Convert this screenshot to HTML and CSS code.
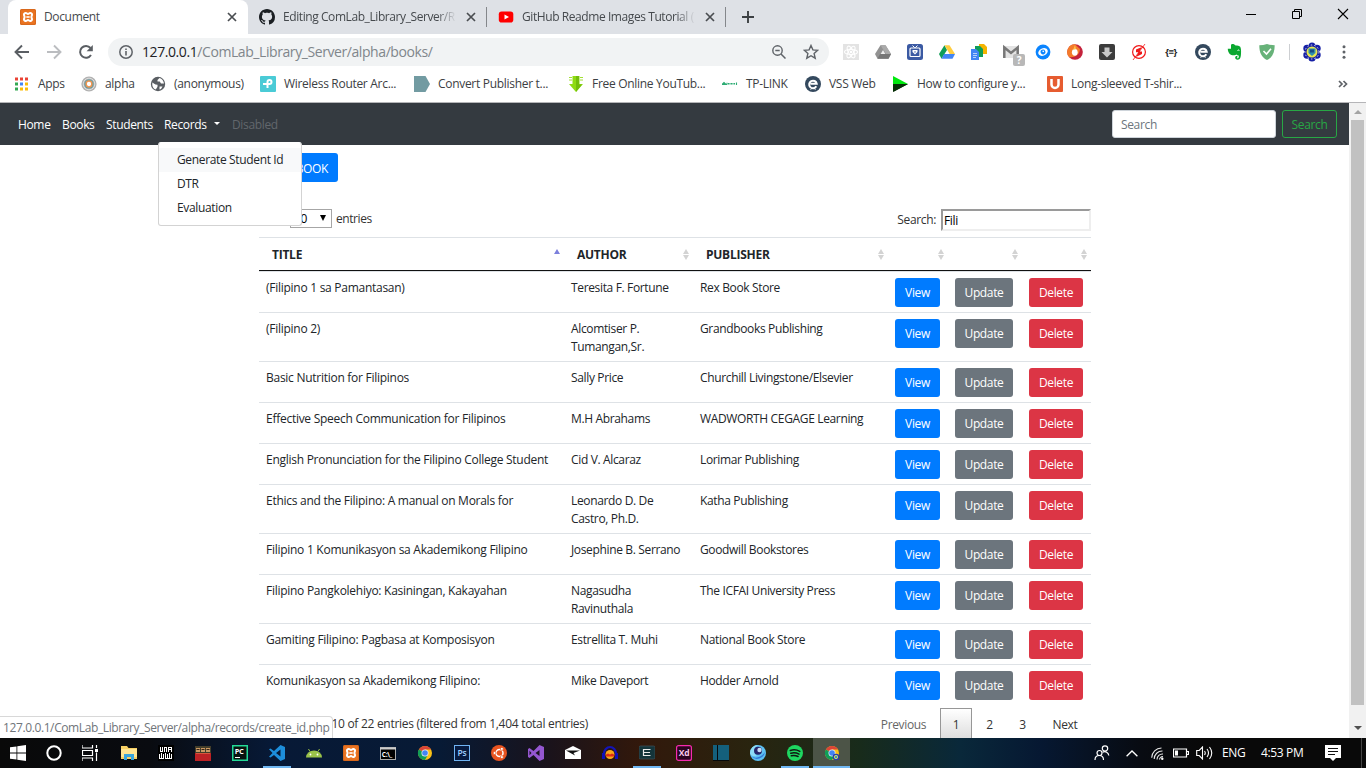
FILE: index.html
```html
<!DOCTYPE html>
<html lang="en">
<head>
<meta charset="utf-8">
<title>Document</title>
<link rel="stylesheet" href="styles.css">
</head>
<body>
<svg class="defs" width="0" height="0">
  <symbol id="close" viewBox="0 0 10 10"><path d="M1 1l8 8M9 1L1 9" fill="none" stroke="#4a4d51" stroke-width="1.700"/></symbol>
  <symbol id="xampp" viewBox="0 0 16 16"><rect width="16" height="16" rx="1.500" fill="#ea7422"/><rect x=".6" y=".6" width="14.800" height="14.800" rx="1" fill="none" stroke="#c9601a" stroke-width=".6"/><path d="M5 4.200c1.600-.8 2 .8 3 .8s1.400-1.600 3-.8c2.200 1.200.4 2.600.4 3.800s1.800 2.600-.4 3.800c-1.600.8-2-.8-3-.8s-1.400 1.600-3 .8c-2.200-1.200-.4-2.600-.4-3.800S2.800 5.400 5 4.200z" fill="none" stroke="#fff" stroke-width="2"/><path d="M6.300 8h3.400" stroke="#fff" stroke-width="1.600"/></symbol>
  <symbol id="chrome" viewBox="0 0 16 16"><circle cx="8" cy="8" r="7" fill="#fbc116"/><path d="M8 8L1.900 4.500A7 7 0 0 1 14.100 4.500H8z" fill="#db4437"/><path d="M1.900 4.500A7 7 0 0 0 8 15l3-5.200L8 8z" fill="#0f9d58"/><circle cx="8" cy="8" r="3.500" fill="#f1f1f1"/><circle cx="8" cy="8" r="2.800" fill="#4285f4"/></symbol>
  <symbol id="eface" viewBox="0 0 16 16"><circle cx="8" cy="8" r="8" fill="#34495e"/><path d="M11.300 10.300A3.800 3.800 0 1 1 11.700 7.700H5.500" fill="none" stroke="#fff" stroke-width="2"/><path d="M5.500 13.500l2-1.500M10.500 13.500l-2-1.500" stroke="#fff" stroke-width="1"/></symbol>
</svg>

<header class="tabs">
  <div class="tab active">
    <svg class="ic" viewBox="0 0 16 16"><use href="#xampp"/></svg>
    <span class="tab-title">Document</span>
    <svg class="x" viewBox="0 0 10 10"><use href="#close"/></svg>
  </div>
  <div class="tab">
    <svg class="ic" viewBox="0 0 16 16"><path fill="#1b1f23" fill-rule="evenodd" d="M8 0C3.580 0 0 3.580 0 8c0 3.540 2.290 6.530 5.470 7.590.4.070.55-.17.55-.38 0-.19-.01-.82-.01-1.490-2.010.37-2.530-.49-2.690-.94-.09-.23-.48-.94-.82-1.130-.28-.15-.68-.52-.01-.53.63-.01 1.080.58 1.230.82.72 1.210 1.870.87 2.330.66.07-.52.28-.87.51-1.070-1.780-.2-3.640-.89-3.640-3.950 0-.87.31-1.590.82-2.150-.08-.2-.36-1.020.08-2.120 0 0 .67-.21 2.200.82.64-.18 1.320-.27 2-.27s1.360.09 2 .27c1.530-1.040 2.200-.82 2.200-.82.44 1.100.16 1.920.08 2.120.51.56.82 1.270.82 2.150 0 3.070-1.870 3.750-3.650 3.950.29.25.54.73.54 1.480 0 1.070-.01 1.930-.01 2.200 0 .21.15.46.55.38A8.010 8.010 0 0 0 16 8c0-4.420-3.580-8-8-8z"/></svg>
    <span class="tab-title fade">Editing ComLab_Library_Server/R</span>
    <svg class="x" viewBox="0 0 10 10"><use href="#close"/></svg>
  </div>
  <div class="tab">
    <svg class="ic" viewBox="0 0 16 16"><rect x=".8" y="2.500" width="14.500" height="11" rx="2.800" fill="#f00"/><path d="M6.500 5.500v5L11 8z" fill="#fff"/></svg>
    <span class="tab-title fade">GitHub Readme Images Tutorial (</span>
    <svg class="x" viewBox="0 0 10 10"><use href="#close"/></svg>
  </div>
  <svg class="plus" viewBox="0 0 12 12"><path d="M6 0v12M0 6h12" stroke="#3c4043" stroke-width="1.900"/></svg>
  <div class="winbtns">
    <svg viewBox="0 0 12 12"><path d="M1 6.500h10" stroke="#000"/></svg>
    <svg viewBox="0 0 12 12"><path d="M1.500 3.500h7v7h-7zM3.500 3.500v-2h7v7h-2" fill="none" stroke="#000"/></svg>
    <svg viewBox="0 0 12 12"><path d="M1 1l10 10M11 1L1 11" stroke="#000" stroke-width="1.100"/></svg>
  </div>
</header>

<div class="toolbar">
  <div class="navbtns">
    <svg viewBox="0 0 16 16"><path d="M15 8H2M8 1.500L1.500 8 8 14.500" fill="none" stroke="#5a5e63" stroke-width="1.900"/></svg>
    <svg viewBox="0 0 16 16"><path d="M1 8h13M8 1.500L14.500 8 8 14.500" fill="none" stroke="#bbbdc0" stroke-width="1.900"/></svg>
    <svg viewBox="0 0 16 16"><path d="M13 11A5.900 5.900 0 1 1 12.500 4" fill="none" stroke="#5a5e63" stroke-width="2"/><path d="M14.800 1v6.200H8.600z" fill="#5a5e63"/></svg>
  </div>
  <div class="omnibox">
    <svg class="info-ic" viewBox="0 0 14 14"><circle cx="7" cy="7" r="6.200" fill="none" stroke="#5f6368" stroke-width="1.500"/><path d="M7 6v4.500M7 3.500v1.500" stroke="#5f6368" stroke-width="1.600"/></svg>
    <span class="url">127.0.0.1<span>/ComLab_Library_Server/alpha/books/</span></span>
    <svg class="mag" viewBox="0 0 14 14"><circle cx="5.500" cy="5.500" r="4.700" fill="none" stroke="#5f6368" stroke-width="1.400"/><path d="M9 9l4.500 4.500M3.300 5.500h4.400" stroke="#5f6368" stroke-width="1.500"/></svg>
    <svg class="star" viewBox="0 0 16 16"><path d="M8 1.500l1.900 4.400 4.800.4-3.600 3.200 1.100 4.700L8 11.700l-4.200 2.500 1.100-4.700L1.300 6.300l4.800-.4z" fill="none" stroke="#5f6368" stroke-width="1.400"/></svg>
  </div>
  <div class="exts">
    <svg viewBox="0 0 16 16"><rect width="16" height="16" fill="#e3e3e3"/><g fill="none" stroke="#fff" stroke-width="1.100"><ellipse cx="8" cy="8" rx="6.500" ry="2.500"/><ellipse cx="8" cy="8" rx="6.500" ry="2.500" transform="rotate(60 8 8)"/><ellipse cx="8" cy="8" rx="6.500" ry="2.500" transform="rotate(120 8 8)"/></g><circle cx="8" cy="8" r="1.300" fill="#fff"/></svg>
    <svg viewBox="0 0 16 16"><path d="M5.500 1.300h5L16 10l-2.500 4.700h-11L0 10z" fill="#929292"/><path d="M5.500 1.300h5L16 10h-5z" fill="#aaa"/><path d="M8 6l2.300 4H5.700z" fill="#eee"/><path d="M2.500 14.700L5 10h11l-2.500 4.700z" fill="#777"/></svg>
    <svg viewBox="0 0 16 16"><rect width="16" height="16" rx="2.500" fill="#3b5aa3"/><path d="M5.500 1.500l2 2h1l2-2" fill="none" stroke="#fff"/><rect x="3" y="4" width="10" height="8.500" rx="1" fill="none" stroke="#fff" stroke-width="1.200"/><path d="M5.500 6h5v2L8 10.500 5.500 8z" fill="#fff"/><path d="M7 7.500h2L8 9z" fill="#3b5aa3"/></svg>
    <svg viewBox="0 0 16 16"><path d="M5.500 1.300L0 10l2.500 4.700L8 6z" fill="#0f9d58"/><path d="M5.500 1.300h5L16 10h-5.300z" fill="#ffcd40"/><path d="M2.500 14.700L5 10h11l-2.500 4.700z" fill="#4285f4"/></svg>
    <svg viewBox="0 0 16 16"><path d="M8 0h5l3 3v7H8z" fill="#f4b400"/><path d="M4 2h5l3 3v8H4z" fill="#0f9d58"/><path d="M0 5h5l3 3v8H0z" fill="#4285f4"/><path d="M2 9.500h4M2 11.500h4M2 13.500h3" stroke="#c4d9fb" stroke-width=".9"/></svg>
    <span class="gmail"><svg viewBox="0 0 16 16"><rect y="2" width="16" height="12" fill="#e3e3e3"/><path d="M1.300 14V3.500L8 9l6.700-5.500V14" fill="none" stroke="#777" stroke-width="2.500"/></svg><b>?</b></span>
    <svg viewBox="0 0 16 16"><circle cx="8" cy="8" r="7.400" fill="#0a84ff"/><g transform="rotate(-25 8 8)"><ellipse cx="8" cy="8" rx="5" ry="3.600" fill="#fff"/><circle cx="8" cy="8" r="2.400" fill="#0a84ff"/><circle cx="8.500" cy="7.500" r=".8" fill="#fff"/></g></svg>
    <svg viewBox="0 0 16 16"><circle cx="8" cy="8" r="7.800" fill="#c4223c"/><path d="M8 .2A7.800 7.800 0 0 0 2 13C7 14 13 11 13 5L8 .2z" fill="#f47b2a"/><ellipse cx="7.800" cy="8.300" rx="2.900" ry="3.400" fill="#fff"/><path d="M8 1l1 4-3 1z" fill="#fdc04b"/></svg>
    <svg viewBox="0 0 16 16"><rect width="16" height="16" rx="2" fill="#3c3c3c"/><path d="M5.500 3.500h5V8h3L8 13.500 2.500 8h3z" fill="#c9c9c9"/></svg>
    <svg viewBox="0 0 16 16"><circle cx="8" cy="8" r="6.400" fill="none" stroke="#f01818" stroke-width="1.200"/><path d="M14 0L2 16" stroke="#f01818" stroke-width=".8"/><path d="M11 3L5 5.500v2.700h2.500L5 13l6-3V7.500H8.500z" fill="#f01818"/></svg>
    <span class="json">{≡}</span>
    <svg viewBox="0 0 16 16"><use href="#eface"/></svg>
    <svg viewBox="0 0 16 16"><path d="M5 0c2 0 3 .6 3.500 1.500 2 .1 4 .4 4.700 1.300.8 1.200 1 4 .8 7-.1 3-.8 6-3.300 6-1.700 0-2.500-.9-2.500-2.200 0-1.200.9-1.700 2.200-1.500v1.300c-.7 0-.8.9 0 .9 1.300 0 1.600-1.600 1.300-2.900-1 .3-1.500-.1-2-.9-1.200 1-5.300 1.300-7-.5C1.500 8.500.7 6.300.8 4.700H4V.7z" fill="#0aa82f"/><path d="M10.500 6.500c.6-.8 1.500-.7 1.800.3" stroke="#fff" fill="none"/></svg>
    <svg viewBox="0 0 16 16"><path d="M8 0c2.500.8 5 1.200 7.700 1.300C15.700 8.500 13.500 13.500 8 16 2.500 13.500.3 8.500.3 1.300 3 1.200 5.500.8 8 0z" fill="#67b279"/><path d="M4.500 7l3 3L12 4.700" fill="none" stroke="#fff" stroke-width="1.600"/></svg>
  </div>
  <div class="vsep"></div>
  <svg class="avatar" viewBox="0 0 20 20"><g fill="#151fa5"><circle cx="10" cy="4" r="3.500"/><circle cx="15" cy="6.500" r="3.700"/><circle cx="15" cy="13" r="3.700"/><circle cx="10" cy="16" r="3.600"/><circle cx="5" cy="13" r="3.700"/><circle cx="5" cy="6.500" r="3.700"/></g><circle cx="10" cy="10" r="7" fill="none" stroke="#e0e0e6" stroke-dasharray="1.500 2"/><circle cx="10" cy="10" r="5.500" fill="#e8e64f"/><path d="M6.500 6.500h7v4.500L10 14l-3.500-3z" fill="#2e8eaf"/><path d="M8 7.500h4v3H8z" fill="#174e84"/></svg>
  <svg class="dots" viewBox="0 0 4 16"><circle cx="2" cy="2.700" r="1.500"/><circle cx="2" cy="8" r="1.500"/><circle cx="2" cy="13.300" r="1.500"/></svg>
</div>

<nav class="bookmarks">
  <a class="bk w-apps"><svg viewBox="0 0 16 16"><path d="M2 1.500h3v3H2zM7 1.500h3v3H7zM12 1.500h3v3h-3z" fill="#ea4335"/><path d="M2 6.500h3v3H2z" fill="#34a853"/><path d="M7 6.500h3v3H7z" fill="#4285f4"/><path d="M12 6.500h3v3h-3zM7 11.500h3v3H7zM12 11.500h3v3h-3z" fill="#fbbc05"/><path d="M2 11.500h3v3H2z" fill="#34a853"/></svg>Apps</a>
  <a class="bk w-alpha"><svg viewBox="0 0 16 16"><circle cx="8" cy="8" r="7.600" fill="#b1b1b1"/><circle cx="8" cy="8" r="5.800" fill="none" stroke="#ddd"/><circle cx="8" cy="8" r="4.600" fill="#579ca5"/><circle cx="8" cy="8" r="2.900" fill="#fff" stroke="#ef9551" stroke-width="1.500"/></svg>alpha</a>
  <a class="bk w-anon"><svg viewBox="0 0 16 16"><circle cx="8" cy="8" r="7.200" fill="#5a5e63"/><path d="M2.300 6.500l3.200 2 2 .3v2l-1.700 2.700c-2.500-.7-4-3-3.500-7zM9.500 2L7.500 4v1.500h2.200l1.300 2h3c-.3-2.500-2-5-4.500-5.500zM9.500 10.500h3l-1.500 2.500-1.500.5z" fill="#fff"/></svg>(anonymous)</a>
  <a class="bk w-154"><svg viewBox="0 0 16 16"><rect width="16" height="16" rx="1" fill="#4acbd6"/><path d="M3 8h6.500a2 2 0 1 0-2-2v6" fill="none" stroke="#fff" stroke-width="2"/></svg>Wireless Router Arc...</a>
  <a class="bk w-154"><svg viewBox="0 0 16 16"><path d="M0 0h11.500L16 8l-4.500 8H0z" fill="#729ba2"/></svg>Convert Publisher t...</a>
  <a class="bk w-154"><svg viewBox="0 0 16 16"><path d="M4.500 0h7v8H15l-7 8-7-8h3.500z" fill="#8edb12"/><path d="M1 1.500h3M12 1.500h3M1 4h3M12 4h3" stroke="#a3e035"/><path d="M8 0h3v8.500h3L8 16z" fill="#72bd0b"/></svg>Free Online YouTub...</a>
  <a class="bk w-tp"><svg viewBox="0 0 16 16"><path d="M0 8.500l2-2 2 2zM5 6.700v1.800M6.500 7v1.500M8 7v1.500M9.500 7v1.500M11 7v1.500M12.500 7v1.500M14.500 6.500v2.500" fill="#2bab72" stroke="#2bab72" stroke-width="1.100"/></svg>TP-LINK</a>
  <a class="bk w-vss"><svg viewBox="0 0 16 16"><use href="#eface"/></svg>VSS Web</a>
  <a class="bk w-how"><svg viewBox="0 0 16 16"><path d="M1 0l15 8H1z" fill="#00e80e"/><path d="M1 16l15-8H8z" fill="#052e05"/><path d="M1 8h15L1 16z" fill="#052e05"/></svg>How to configure y...</a>
  <a class="bk"><svg viewBox="0 0 16 16"><rect width="16" height="16" rx="1" fill="#e65c30"/><path d="M4.500 3v5.500a3.500 3.500 0 0 0 7 0V3" fill="none" stroke="#fff" stroke-width="2.500"/></svg>Long-sleeved T-shir...</a>
  <svg class="more" viewBox="0 0 10 8"><path d="M1 1l3 3-3 3M5.500 1l3 3-3 3" fill="none" stroke="#5f6368" stroke-width="1.700"/></svg>
</nav>

<div class="viewport">
  <div class="page">
    <nav class="navbar">
      <a class="n-home">Home</a><a class="n-books">Books</a><a class="n-students">Students</a>
      <a class="n-records">Records<i class="caret"></i></a><a class="disabled">Disabled</a>
      <div class="nav-search"><span class="input">Search</span><span class="outline">Search</span></div>
      <div class="dropdown"><a class="hover">Generate Student Id</a><a>DTR</a><a>Evaluation</a></div>
    </nav>
    <main class="container">
      <div class="btn add">BOOK</div>
      <div class="controls">
        <span class="length"><span class="select">10<i></i></span>entries</span>
        <label class="filter">Search:<span class="field">Fili</span></label>
      </div>
      <table>
        <colgroup><col class="c1"><col class="c2"><col class="c3"><col class="c4"><col class="c5"><col class="c6"></colgroup>
        <thead><tr><th class="asc">TITLE</th><th>AUTHOR</th><th>PUBLISHER</th><th></th><th></th><th></th></tr></thead>
        <tbody>
          <tr><td>(Filipino 1 sa Pamantasan)</td><td>Teresita F. Fortune</td><td>Rex Book Store</td><td><a class="btn view">View</a></td><td><a class="btn update">Update</a></td><td><a class="btn delete">Delete</a></td></tr>
          <tr class="tall"><td>(Filipino 2)</td><td>Alcomtiser P.<br>Tumangan,Sr.</td><td>Grandbooks Publishing</td><td><a class="btn view">View</a></td><td><a class="btn update">Update</a></td><td><a class="btn delete">Delete</a></td></tr>
          <tr><td>Basic Nutrition for Filipinos</td><td>Sally Price</td><td>Churchill Livingstone/Elsevier</td><td><a class="btn view">View</a></td><td><a class="btn update">Update</a></td><td><a class="btn delete">Delete</a></td></tr>
          <tr><td>Effective Speech Communication for Filipinos</td><td>M.H Abrahams</td><td>WADWORTH CEGAGE Learning</td><td><a class="btn view">View</a></td><td><a class="btn update">Update</a></td><td><a class="btn delete">Delete</a></td></tr>
          <tr><td>English Pronunciation for the Filipino College Student</td><td>Cid V. Alcaraz</td><td>Lorimar Publishing</td><td><a class="btn view">View</a></td><td><a class="btn update">Update</a></td><td><a class="btn delete">Delete</a></td></tr>
          <tr class="tall"><td>Ethics and the Filipino: A manual on Morals for</td><td>Leonardo D. De<br>Castro, Ph.D.</td><td>Katha Publishing</td><td><a class="btn view">View</a></td><td><a class="btn update">Update</a></td><td><a class="btn delete">Delete</a></td></tr>
          <tr><td>Filipino 1 Komunikasyon sa Akademikong Filipino</td><td>Josephine B. Serrano</td><td>Goodwill Bookstores</td><td><a class="btn view">View</a></td><td><a class="btn update">Update</a></td><td><a class="btn delete">Delete</a></td></tr>
          <tr class="tall"><td>Filipino Pangkolehiyo: Kasiningan, Kakayahan</td><td>Nagasudha<br>Ravinuthala</td><td>The ICFAI University Press</td><td><a class="btn view">View</a></td><td><a class="btn update">Update</a></td><td><a class="btn delete">Delete</a></td></tr>
          <tr><td>Gamiting Filipino: Pagbasa at Komposisyon</td><td>Estrellita T. Muhi</td><td>National Book Store</td><td><a class="btn view">View</a></td><td><a class="btn update">Update</a></td><td><a class="btn delete">Delete</a></td></tr>
          <tr><td>Komunikasyon sa Akademikong Filipino:</td><td>Mike Daveport</td><td>Hodder Arnold</td><td><a class="btn view">View</a></td><td><a class="btn update">Update</a></td><td><a class="btn delete">Delete</a></td></tr>
        </tbody>
      </table>
      <div class="footer">
        <span class="info">10 of 22 entries (filtered from 1,404 total entries)</span>
        <div class="pager"><a class="prev">Previous</a><a class="current">1</a><a>2</a><a>3</a><a class="next">Next</a></div>
      </div>
    </main>
    <div class="status">127.0.0.1/ComLab_Library_Server/alpha/records/create_id.php</div>
  </div>
  <div class="scrollbar"><i class="up"></i><div class="thumb"></div><i class="down"></i></div>
</div>

<footer class="taskbar">
  <div class="sys">
    <svg viewBox="0 0 16 16"><path d="M0 2.300L6.500 1.400v6.200H0zM7.300 1.300L16 0v7.600H7.300zM0 8.400h6.500v6.200L0 13.700zM7.300 8.400H16V16l-8.700-1.300z" fill="#fff"/></svg>
    <svg viewBox="0 0 16 16"><circle cx="8" cy="8" r="6.700" fill="none" stroke="#fff" stroke-width="2"/></svg>
    <svg viewBox="0 0 16 16"><path d="M0 0v3h10.500V0M.5 5.500h10v5H.5zM0 16v-3h10.500v3M14.500 0v3M14.500 7.500V16" fill="none" stroke="#fff" stroke-width="1.200"/><rect x="13" y="4" width="3" height="3" fill="#fff"/></svg>
  </div>
  <div class="apps">
    <span><svg viewBox="0 0 16 16"><path d="M0 1h6l1.500 2H16v11H0z" fill="#f7d063"/><path d="M0 4h16v8H0z" fill="#ffe592"/><path d="M3 15V9h10v6h-3v-3H6v3z" fill="#39a5dc"/></svg></span>
    <span><svg viewBox="0 0 16 16"><path fill="#000" d="M0 0h16v16H0z"/><path d="M2.500 2v5M4.500 2v5M6.500 2v5M8.500 2v5M10.500 2v5M13.500 2v5M2 6.500h3M6 2.500h3M10 2.500h4M11 4.500h3M1.500 9v5M3.500 8v6M5.500 9v5M7.500 8v6M9.500 9v5M11.500 8v6M13.500 9v5M1 13.500h5M8 13.500h6" fill="none" stroke="#fff" stroke-width="1"/></svg></span>
    <span><svg viewBox="0 0 16 16"><path d="M0 1h16v7H0z" fill="#423d2a"/><path d="M1 3h4v4H1zM6 3h4v4H6zM11 3h4v4h-4z" fill="#c99761"/><path d="M1.500 4.500h3M6.500 4.500h3M11.500 4.500h3" stroke="#352519"/><path d="M0 8h16v8H0z" fill="#bd2225"/><path d="M1 8.500h14" stroke="#d8563b"/></svg></span>
    <span><svg viewBox="0 0 16 16"><rect x=".75" y=".75" width="14.500" height="14.500" fill="#08120f" stroke="#23da97" stroke-width="1.500"/><text x="2.700" y="8.800" font-size="7.500" font-weight="700" fill="#fff">PC</text><path d="M3 12.500h5" stroke="#fff"/></svg></span>
    <span class="run"><svg viewBox="0 0 16 16"><path d="M11.500 0L16 2v12l-4.500 2L5 10l-3.500 2.500L0 11.700 3.500 8 0 4.300l1.500-.8L5 6zM11.500 4.500L7 8l4.500 3.500z" fill="#1d8edb" fill-rule="evenodd"/></svg></span>
    <span><svg viewBox="0 0 16 16"><path d="M0 12.500a8 7 0 0 1 16 0z" fill="#9bc34a"/><path d="M4 6.500L2.500 4M12 6.500l1.500-2.500" stroke="#9bc34a"/><circle cx="4.500" cy="9.500" r=".9" fill="#fff"/><circle cx="11.500" cy="9.500" r=".9" fill="#fff"/></svg></span>
    <span><svg viewBox="0 0 16 16"><use href="#xampp"/></svg></span>
    <span><svg viewBox="0 0 16 16"><rect x=".5" y="2.500" width="15" height="12" fill="#000" stroke="#aaa"/><path d="M0 3.500h16" stroke="#ccc" stroke-width="2"/><text x="1.800" y="11.500" font-size="6.500" font-weight="700" fill="#fff">C:\_</text></svg></span>
    <span><svg viewBox="0 0 16 16"><use href="#chrome"/></svg></span>
    <span><svg viewBox="0 0 16 16"><rect x=".5" y=".5" width="15" height="15" fill="#071b40" stroke="#70b4f3"/><text x="3.500" y="11" font-size="8.500" font-weight="600" fill="#a0d0ff">Ps</text></svg></span>
    <span><svg viewBox="0 0 16 16"><circle cx="8" cy="8" r="8" fill="#e95420"/><circle cx="8.500" cy="8" r="3.500" fill="none" stroke="#fff" stroke-width="1.500"/><g fill="#fff" stroke="#e95420" stroke-width=".7"><circle cx="3.600" cy="8" r="1.500"/><circle cx="10.900" cy="3.900" r="1.500"/><circle cx="10.900" cy="12.100" r="1.500"/></g></svg></span>
    <span><svg viewBox="0 0 16 16"><path d="M11.500 0L16 2v12l-4.500 2L5.500 10l-4 3L0 12V4l1.500-1 4 3zM11.500 5L7.500 8l4 3zM1.500 5.800v4.400L3.500 8z" fill="#9457d0" fill-rule="evenodd"/></svg></span>
    <span><svg viewBox="0 0 16 16"><path d="M0 5l8-4 8 4v9H0z" fill="#fff"/><path d="M1 5.500h14L8.500 8l1.500 2.500z" fill="#111"/></svg></span>
    <span><svg viewBox="0 0 16 16"><path d="M2 9a6 7 0 0 1 12 0" fill="none" stroke="#1414b8" stroke-width="2.200"/><path d="M0 8h3v6H0zM13 8h3v6h-3z" fill="#0f10b7"/><circle cx="8" cy="9.500" r="4.500" fill="#f9a619"/><path d="M4 9.500l2-1 2 1 2-1 2 1v2H4z" fill="#df2b16"/></svg></span>
    <span class="run"><svg viewBox="0 0 16 16"><rect y="1" width="16" height="13" rx="1.500" fill="#14343a" stroke="#41555b" stroke-width=".7"/><path d="M11.500 4.500h-7v6h7M5 7.500h6" fill="none" stroke="#e9e9e9" stroke-width="1.200"/></svg></span>
    <span><svg viewBox="0 0 16 16"><rect x=".6" y=".6" width="14.800" height="14.800" rx="2" fill="#2b0420" stroke="#f62baf" stroke-width="1.200"/><text x="2.800" y="11" font-size="8.500" font-weight="700" fill="#fac8ee">Xd</text></svg></span>
    <span><svg viewBox="0 0 16 16"><path d="M0 0h16v15H0z" fill="#14607c"/><path d="M4.500 0v15M0 15.500h16" stroke="#05090b"/></svg></span>
    <span><svg viewBox="0 0 16 16"><circle cx="8" cy="8" r="8" fill="#5cc0f2"/><path d="M1 11c4 3 10 2 14-4a8 8 0 0 1-14 4z" fill="#3478d8"/><path d="M0 8a8 8 0 0 1 8-8C4 3 3 8 7 11 3 12 0 10 0 8z" fill="#8edcf6"/><circle cx="8" cy="5.800" r="4" fill="#27266b"/><circle cx="9.500" cy="5" r="2.200" fill="#c9dff5"/></svg></span>
    <span class="run"><svg viewBox="0 0 16 16"><circle cx="8" cy="8" r="8" fill="#1ed760"/><path d="M3.300 5.500c3-1 6.700-.7 9.500.9M3.800 8.200c2.700-.8 5.700-.5 8.200.9M4.300 10.700c2.300-.6 4.700-.3 6.800.8" fill="none" stroke="#101813" stroke-width="1.500" stroke-linecap="round"/></svg></span>
    <span class="run focus"><svg viewBox="0 0 16 16"><use href="#chrome"/><circle cx="12" cy="12" r="3.300" fill="#253bb1"/><circle cx="12" cy="12" r="1.700" fill="#469ca3" stroke="#e8e66d" stroke-width=".8"/></svg></span>
  </div>
  <div class="tray">
    <svg class="people" viewBox="0 0 16 16"><g fill="none" stroke="#fff" stroke-width="1.200"><circle cx="5.500" cy="8" r="2.500"/><path d="M1 15c0-6 8.500-6 8.500 0"/><circle cx="11" cy="3.500" r="2.700"/><path d="M8.500 7.300c3-1.500 6 .2 6.300 3.200"/></g></svg>
    <svg class="chev" viewBox="0 0 12 7"><path d="M.6 6.300L6 1l5.400 5.300" fill="none" stroke="#fff" stroke-width="1.300"/></svg>
    <svg class="wifi" viewBox="0 0 13 13"><g fill="none" stroke="#e8e8e8" stroke-width="1.100"><path d="M.7 10.800A10 10 0 0 1 10.500 1M3.200 12A8 8 0 0 1 11.500 4M6 12.500A5.500 5.500 0 0 1 12 7M8.500 12.500A3 3 0 0 1 12 9.700"/></g><circle cx="11.300" cy="11.800" r="1.200" fill="#fff"/></svg>
    <svg class="batt" viewBox="0 0 16 10"><path d="M.5 1h13v8H.5zM14 3.500h1.500v3H14" fill="none" stroke="#fff" stroke-width="1.200"/><path d="M2 2.500h3v5H2z" fill="#fff"/></svg>
    <svg class="vol" viewBox="0 0 17 14"><path d="M.7 4.500h2.500L6.500 1v12L3.200 9.500H.7zM8.500 5q1.500 2 0 4M11 3q3 4 0 8M13.500 1q4.500 6 0 12" fill="none" stroke="#fff" stroke-width="1.100"/></svg>
    <span class="lang">ENG</span><span class="time">4:53 PM</span>
    <svg class="note" viewBox="0 0 16 16"><path d="M0 0h16v13h-5L8 16l-3-3H0z" fill="#fff"/><path d="M3 3.500h10M3 6.500h10M3 9.500h7" stroke="#111"/></svg>
    <i class="peek"></i>
  </div>
</footer>
</body>
</html>
```
FILE: styles.css
```css
* { box-sizing: border-box; }
body {
  margin: 0; width: 1366px; height: 768px; overflow: hidden;
  display: flex; flex-direction: column;
  font-family: "Open Sans", "Noto Sans", sans-serif; font-size: 12px; line-height: 18px;
  letter-spacing: -0.35px; color: #212529; background: #fff;
}
svg { display: block; flex: none; }
.defs { position: absolute; }

/* tab strip */
.tabs { height: 34px; background: #dee1e6; display: flex; align-items: center; padding-left: 8px; flex: none; }
.tab { height: 34px; width: 239px; display: flex; align-items: center; padding: 0 11px 0 12px; color: #45494d; position: relative; }
.tab.active { background: #fff; border-radius: 8px 8px 0 0; width: 240px; }
.tab:not(.active)::after { content: ""; position: absolute; right: 0; top: 7px; height: 20px; width: 1px; background: #84878b; }
.tab .ic { width: 16px; height: 16px; margin-right: 8px; }
.tab:not(.active) { padding-left: 11px; }
.tab-title { flex: 1; white-space: nowrap; margin-right: 8px; }
.fade { letter-spacing: -0.42px; -webkit-mask-image: linear-gradient(90deg, #000 88%, transparent 99%); mask-image: linear-gradient(90deg, #000 88%, transparent 99%); }
.tab .x { width: 10px; height: 10px; }
.plus { width: 12px; height: 12px; margin-left: 16px; }
.winbtns { margin-left: auto; display: flex; gap: 34px; padding: 0 17px 6px 0; }
.winbtns svg { width: 12px; height: 12px; }

/* toolbar */
.toolbar { height: 35px; display: flex; align-items: center; padding-left: 14px; flex: none; }
.navbtns { display: flex; gap: 16px; margin-right: 14px; }
.navbtns svg { width: 16px; height: 16px; }
.omnibox { width: 721px; height: 28px; border-radius: 14px; background: #f1f3f4; display: flex; align-items: center; padding: 0 10px 0 11px; margin-top: 1px; }
.info-ic { width: 14px; height: 14px; margin-right: 9px; }
.url { flex: 1; font-size: 14px; letter-spacing: -0.42px; color: #202124; white-space: nowrap; }
.url span { color: #80868b; }
.mag { width: 14px; height: 14px; margin-right: 17px; }
.star { width: 16px; height: 16px; }
.exts { display: flex; gap: 16px; margin-left: 14px; align-items: center; }
.exts > svg, .gmail svg { width: 16px; height: 16px; }
.exts > span { width: 16px; height: 16px; position: relative; }
.gmail b { position: absolute; left: 10px; top: 10px; width: 12px; height: 12px; border-radius: 2px; background: #b8b8b8; color: #fff; font-size: 10px; line-height: 12px; text-align: center; }
.json { font-size: 9.500px; font-weight: 700; line-height: 16px; color: #222; letter-spacing: -0.5px; text-align: center; }
.vsep { width: 1px; height: 16px; background: #cdcfd2; margin: 0 12px 0 14px; }
.avatar { width: 20px; height: 20px; }
.dots { width: 4px; height: 16px; margin-left: 20px; fill: #5f6368; }

/* bookmarks */
.bookmarks { height: 34px; display: flex; align-items: center; padding: 0 18px 4px 13px; border-bottom: 1px solid #b5b5b8; color: #3c4043; letter-spacing: -0.3px; flex: none; }
.bk { display: flex; align-items: center; gap: 8px; white-space: nowrap; flex: none; }
.bk svg { width: 16px; height: 16px; }
.w-apps { width: 68px; gap: 9px; }
.w-alpha { width: 69px; }
.w-anon { width: 110px; }
.w-154 { width: 154px; }
.w-tp { width: 83px; }
.w-vss { width: 87px; }
.w-how { width: 155px; gap: 9px; }
.more { width: 10px; height: 8px; margin-left: auto; }

/* page viewport */
.viewport { height: 635px; display: flex; flex: none; }
.page { width: 1349px; height: 635px; position: relative; overflow: hidden; }
.navbar { height: 42px; background: #343a40; display: flex; align-items: center; padding: 0 12px 0 18px; color: #fff; position: relative; }
.navbar > a { padding-top: 2px; }
.n-home, .n-books { width: 44px; }
.n-students { width: 58px; }
.n-records { width: 68px; display: flex; align-items: center; justify-content: space-between; padding-right: 12px; }
.caret { border: 3.500px solid transparent; border-top-color: #fff; border-bottom: 0; margin-top: -3px; }
.disabled { color: #62676c; }
.nav-search { margin-left: auto; display: flex; gap: 6px; }
.nav-search .input { width: 164px; height: 28px; border: 1px solid #ced4da; border-radius: 3px; background: #fff; color: #6c757d; line-height: 28px; padding-left: 8px; }
.nav-search .outline { width: 55px; height: 28px; border: 1px solid #28a745; border-radius: 3px; color: #28a745; line-height: 28px; text-align: center; }
.dropdown { position: absolute; left: 158px; top: 39px; width: 144px; height: 84px; padding: 5px 0; background: #fff; border: 1px solid #d3d3d3; border-top-color: #fff; border-radius: 3px; color: #212529; z-index: 3; }
.dropdown a { display: block; height: 24px; line-height: 23px; padding-left: 18px; }
.dropdown .hover { background: #f8f9fa; }

.container { width: 832px; margin-left: 259px; padding-top: 8px; }
.btn { display: block; height: 29px; line-height: 30px; border-radius: 3px; color: #fff; text-align: center; }
.add { width: 79px; background: #007bff; padding-right: 10px; text-align: right; line-height: 31px; }
.controls { display: flex; justify-content: space-between; align-items: center; height: 22px; margin-top: 27px; }
.length { display: flex; align-items: center; gap: 4px; padding-left: 31px; margin-top: -3px; color: #333; letter-spacing: -0.42px; }
.select { width: 42px; height: 19px; border: 1px solid #a6a6a6; line-height: 18px; padding-left: 3px; color: #000; display: flex; justify-content: space-between; align-items: center; padding-right: 5px; }
.select i { border: 3px solid transparent; border-top: 6px solid #000; border-bottom: 0; margin-bottom: 2px; }
.filter { display: flex; align-items: center; gap: 5px; color: #333; }
.field { width: 150px; height: 22px; border: 2px solid; border-color: #9a9a9a #eee #eee #9a9a9a; color: #000; line-height: 20px; padding-left: 1px; }

table { width: 832px; margin-top: 6px; table-layout: fixed; border-collapse: separate; border-spacing: 0; }
.c1 { width: 305px; } .c2 { width: 129px; } .c3 { width: 195px; }
.c4 { width: 60px; } .c5 { width: 74px; } .c6 { width: 69px; }
th { height: 34px; padding: 1px 13px 0; text-align: left; font-weight: 700; letter-spacing: -0.25px; border-top: 1px solid #dee2e6; border-bottom: 1px solid #111; position: relative; }
th::before, th::after { content: ""; position: absolute; right: 4px; border: 3px solid transparent; }
th::before { top: 11px; border-top: 0; border-bottom: 5px solid #d3d3d3; }
th::after { top: 17px; border-bottom: 0; border-top: 5px solid #d3d3d3; }
th.asc::before { border-bottom-color: #7c80dc; }
th.asc::after { display: none; }
td { height: 41px; padding: 7px 7px 0; border-top: 1px solid #dee2e6; vertical-align: top; white-space: nowrap; line-height: 18px; }
td:first-child { letter-spacing: -0.27px; }
.tall td { height: 49px; }
td .btn { margin-top: -1px; }
.view { width: 45px; background: #007bff; }
.update { width: 58px; background: #6c757d; }
.delete { width: 54px; background: #dc3545; }
.footer { display: flex; justify-content: space-between; margin-top: 3px; color: #333; }
.info { width: 329px; text-align: right; padding-top: 7px; white-space: nowrap; letter-spacing: -0.29px; }
.pager { display: flex; line-height: 33px; text-align: center; }
.pager a { width: 33px; height: 33px; }
.pager .prev { width: 73px; color: #666; }
.pager .current { width: 32px; margin-right: 1px; border: 1px solid #979797; background: linear-gradient(#fff, #dcdcdc); line-height: 31px; }
.pager .next { width: 52px; }
.status { position: absolute; left: 0; bottom: 0; width: 333px; height: 22px; border: 1px solid #d8d8d8; border-width: 1px 1px 0 0; border-radius: 0 4px 0 0; background: #fff; color: #70757a; padding-left: 3px; line-height: 22px; letter-spacing: -0.39px; white-space: nowrap; }

.scrollbar { width: 17px; background: #f1f1f1; display: flex; flex-direction: column; align-items: center; justify-content: space-between; padding: 7px 0 8px; }
.scrollbar .thumb { width: 13px; flex: 1; margin: 6px 0 21px; background: #c1c1c1; }
.scrollbar i { border: 4px solid transparent; }
.scrollbar .up { border-top: 0; border-bottom-color: #a3a3a3; }
.scrollbar .down { border-bottom: 0; border-top-color: #505050; }

/* taskbar */
.taskbar { height: 30px; flex: none; display: flex; align-items: center; color: #fff; background: linear-gradient(90deg, #090909 0, #090b10 150px, #071936 270px, #071a35 440px, #1a131b 550px, #32180b 640px, #29240f 750px, #182b1b 860px, #09283a 960px, #061832 1040px, #080b12 1140px, #090909 1200px); }
.sys { display: flex; gap: 20px; padding-left: 10px; width: 110px; }
.sys svg, .apps svg { width: 16px; height: 16px; }
.apps { display: flex; }
.apps span { width: 37px; height: 30px; display: flex; align-items: center; justify-content: center; position: relative; }
.apps .run::after { content: ""; position: absolute; left: 5px; right: 4px; bottom: 0; height: 2px; background: #70b7f2; }
.apps .focus { background: #4c5447; }
.apps .focus::after { left: 0; right: 0; }
.apps text { letter-spacing: -0.3px; }
.tray { margin-left: auto; display: flex; align-items: center; height: 30px; }
.people { width: 16px; height: 16px; margin-right: 16px; }
.chev { width: 12px; height: 7px; margin-right: 13px; }
.wifi { width: 13px; height: 13px; margin-right: 9px; }
.batt { width: 16px; height: 10px; margin-right: 7px; }
.vol { width: 17px; height: 14px; margin-right: 9px; }
.lang { width: 39px; }
.time { width: 64px; white-space: nowrap; }
.note { width: 16px; height: 16px; }
.peek { width: 1px; height: 30px; background: #444; margin: 0 4px 0 20px; }
```
